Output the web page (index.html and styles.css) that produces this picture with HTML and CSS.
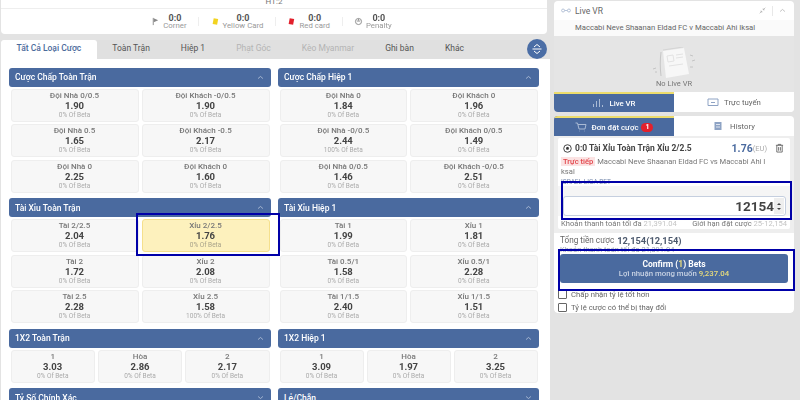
FILE: index.html
```html
<!DOCTYPE html><html>
<head>
    <title>Bet Slip</title>
    <link rel="stylesheet" href="styles.css">
</head>
<body>
<div class="page">
    <div class="main-col">
        <div class="score-card">
            <div class="ht-strip">HT:2</div>
            <div class="stats">
                <div class="stat">
                    <svg class="stat-icon" viewBox="0 0 10 10"><path d="M2.5 1v8" stroke="#888" fill="none"/><path d="M3 1.5l5 2.2-5 2.2z" fill="#888"/></svg>
                    <div class="stat-text"><b>0:0</b><span>Corner</span></div>
                </div>
                <i class="stat-sep"></i>
                <div class="stat">
                    <svg class="stat-icon" viewBox="0 0 10 10"><path d="M3 1.5l5 .8-1.2 6.4-5-.9z" fill="#f2d320"/></svg>
                    <div class="stat-text"><b>0:0</b><span>Yellow Card</span></div>
                </div>
                <i class="stat-sep"></i>
                <div class="stat">
                    <svg class="stat-icon" viewBox="0 0 10 10"><path d="M3 1.5l5 .8-1.2 6.4-5-.9z" fill="#e2202c"/></svg>
                    <div class="stat-text"><b>0:0</b><span>Red card</span></div>
                </div>
                <i class="stat-sep"></i>
                <div class="stat">
                    <svg class="stat-icon" viewBox="0 0 10 10"><circle cx="5" cy="5" r="3.4" stroke="#888" fill="none"/><path d="M3 4.5h4M5 2v2" stroke="#888" fill="none"/></svg>
                    <div class="stat-text"><b>0:0</b><span>Penalty</span></div>
                </div>
            </div>
        </div>

        <div class="tabs">
            <div class="tab active">Tất Cả Loại Cược</div>
            <div class="tab">Toàn Trận</div>
            <div class="tab">Hiệp 1</div>
            <div class="tab muted">Phạt Góc</div>
            <div class="tab muted">Kèo Myanmar</div>
            <div class="tab">Ghi bàn</div>
            <div class="tab">Khác</div>
            <div class="expand-btn">
                <svg viewBox="0 0 12 12" width="12" height="12"><path d="M3 4l3-2.5L9 4M3 8l3 2.5L9 8" stroke="#fff" fill="none"/><path d="M1.5 6h9" stroke="#fff"/></svg>
            </div>
        </div>

        <div class="markets">
            <div class="market">
                <div class="market-head">Cược Chấp Toàn Trận <svg class="chev" viewBox="0 0 10 6"><path d="M1.5 4.5L5 1.5l3.5 3" /></svg></div>
                <div class="odds two">
                    <div class="cell"><b>Đội Nhà 0/0.5</b><strong>1.90</strong><span>0% Of Beta</span></div>
                    <div class="cell"><b>Đội Khách -0/0.5</b><strong>1.90</strong><span>0% Of Beta</span></div>
                    <div class="cell"><b>Đội Nhà 0.5</b><strong>1.65</strong><span>0% Of Beta</span></div>
                    <div class="cell"><b>Đội Khách -0.5</b><strong>2.17</strong><span>0% Of Beta</span></div>
                    <div class="cell"><b>Đội Nhà 0</b><strong>2.25</strong><span>0% Of Beta</span></div>
                    <div class="cell"><b>Đội Khách 0</b><strong>1.60</strong><span>0% Of Beta</span></div>
                </div>
            </div>
            <div class="market">
                <div class="market-head">Cược Chấp Hiệp 1 <svg class="chev" viewBox="0 0 10 6"><path d="M1.5 4.5L5 1.5l3.5 3" /></svg></div>
                <div class="odds two">
                    <div class="cell"><b>Đội Nhà 0</b><strong>1.84</strong><span>0% Of Beta</span></div>
                    <div class="cell"><b>Đội Khách 0</b><strong>1.96</strong><span>0% Of Beta</span></div>
                    <div class="cell"><b>Đội Nhà -0/0.5</b><strong>2.44</strong><span>100% Of Beta</span></div>
                    <div class="cell"><b>Đội Khách 0/0.5</b><strong>1.49</strong><span>0% Of Beta</span></div>
                    <div class="cell"><b>Đội Nhà 0/0.5</b><strong>1.46</strong><span>0% Of Beta</span></div>
                    <div class="cell"><b>Đội Khách -0/0.5</b><strong>2.51</strong><span>0% Of Beta</span></div>
                </div>
            </div>
            <div class="market">
                <div class="market-head">Tài Xỉu Toàn Trận <svg class="chev" viewBox="0 0 10 6"><path d="M1.5 4.5L5 1.5l3.5 3" /></svg></div>
                <div class="odds two">
                    <div class="cell"><b>Tài 2/2.5</b><strong>2.04</strong><span>0% Of Beta</span></div>
                    <div class="cell picked"><b>Xỉu 2/2.5</b><strong>1.76</strong><span>0% Of Beta</span></div>
                    <div class="cell"><b>Tài 2</b><strong>1.72</strong><span>0% Of Beta</span></div>
                    <div class="cell"><b>Xỉu 2</b><strong>2.08</strong><span>0% Of Beta</span></div>
                    <div class="cell"><b>Tài 2.5</b><strong>2.28</strong><span>0% Of Beta</span></div>
                    <div class="cell"><b>Xỉu 2.5</b><strong>1.58</strong><span>100% Of Beta</span></div>
                </div>
            </div>
            <div class="market">
                <div class="market-head">Tài Xỉu Hiệp 1 <svg class="chev" viewBox="0 0 10 6"><path d="M1.5 4.5L5 1.5l3.5 3" /></svg></div>
                <div class="odds two">
                    <div class="cell"><b>Tài 1</b><strong>1.99</strong><span>0% Of Beta</span></div>
                    <div class="cell"><b>Xỉu 1</b><strong>1.81</strong><span>0% Of Beta</span></div>
                    <div class="cell"><b>Tài 0.5/1</b><strong>1.58</strong><span>0% Of Beta</span></div>
                    <div class="cell"><b>Xỉu 0.5/1</b><strong>2.28</strong><span>0% Of Beta</span></div>
                    <div class="cell"><b>Tài 1/1.5</b><strong>2.40</strong><span>0% Of Beta</span></div>
                    <div class="cell"><b>Xỉu 1/1.5</b><strong>1.51</strong><span>0% Of Beta</span></div>
                </div>
            </div>
            <div class="market">
                <div class="market-head">1X2 Toàn Trận <svg class="chev" viewBox="0 0 10 6"><path d="M1.5 4.5L5 1.5l3.5 3" /></svg></div>
                <div class="odds three">
                    <div class="cell"><b>1</b><strong>3.03</strong><span>0% Of Beta</span></div>
                    <div class="cell"><b>Hòa</b><strong>2.86</strong><span>0% Of Beta</span></div>
                    <div class="cell"><b>2</b><strong>2.17</strong><span>0% Of Beta</span></div>
                </div>
            </div>
            <div class="market">
                <div class="market-head">1X2 Hiệp 1 <svg class="chev" viewBox="0 0 10 6"><path d="M1.5 4.5L5 1.5l3.5 3" /></svg></div>
                <div class="odds three">
                    <div class="cell"><b>1</b><strong>3.09</strong><span>0% Of Beta</span></div>
                    <div class="cell"><b>Hòa</b><strong>1.97</strong><span>0% Of Beta</span></div>
                    <div class="cell"><b>2</b><strong>3.25</strong><span>0% Of Beta</span></div>
                </div>
            </div>
            <div class="market">
                <div class="market-head">Tỷ Số Chính Xác <svg class="chev" viewBox="0 0 10 6"><path d="M1.5 1.5L5 4.5l3.5-3" /></svg></div>
            </div>
            <div class="market">
                <div class="market-head">Lẻ/Chẵn <svg class="chev" viewBox="0 0 10 6"><path d="M1.5 1.5L5 4.5l3.5-3" /></svg></div>
            </div>
        </div>
    </div>

    <div class="side-col">
        <div class="live-card">
            <div class="live-head">
                <svg class="live-logo" viewBox="0 0 12 8"><circle cx="2.5" cy="4" r="1.8"/><circle cx="9.5" cy="4" r="1.8"/><path d="M4.5 4h3"/></svg>
                <span>Live VR</span>
                <svg class="live-tool" viewBox="0 0 10 10"><path d="M1 9l3-3M9 1L6 4M6 2v2h2M2 6h2v2"/></svg>
                <i class="live-sep"></i>
                <svg class="live-tool" viewBox="0 0 10 6"><path d="M1.5 4.5L5 1.5l3.5 3"/></svg>
            </div>
            <div class="live-match">Maccabi Neve Shaanan Eldad FC v Maccabi Ahi Iksal</div>
            <div class="live-empty">
                <svg viewBox="0 0 46 32" width="46" height="32">
                    <path d="M12 4l21-3 5 26-23 4z" fill="#f7f7f7"/>
                    <path d="M10 5c-1 8-1 16 0 24" stroke="#c6c6c6" fill="none"/>
                    <path d="M12 3l20-3" stroke="#d4d4d4" fill="none"/>
                    <path d="M16 9l6-1 1 6-6 1zM25 8l7-1M25 11l7-1M18 19l14-2" stroke="#e3e3e3" fill="none"/>
                    <path d="M39 8l3 1M41 14l3-1M39 20l3 0M2 22l3-1M4 25l2 0" stroke="#c4c4c4" fill="none"/>
                </svg>
                <div>No Live VR</div>
            </div>
            <div class="side-tabs">
                <div class="side-tab on">
                    <svg viewBox="0 0 12 10" width="12" height="10"><path d="M1.5 9V6M4.5 9V3M7.5 9V1M10.5 9V7" stroke="#a9bad4" fill="none"/></svg>
                    Live VR
                </div>
                <div class="side-tab">
                    <svg viewBox="0 0 12 10" width="12" height="10"><path d="M1 2h10v6.5H1z" stroke="#8ea3c4" fill="none"/><path d="M4 5.5h4" stroke="#8ea3c4"/></svg>
                    Trực tuyến
                </div>
            </div>
        </div>

        <div class="slip-card">
            <div class="side-tabs">
                <div class="side-tab on">
                    <svg viewBox="0 0 12 10" width="12" height="10"><path d="M.5 1h2l1.5 6h6l1-4.5H3M4.5 9h.5M9 9h.5" stroke="#a9bad4" fill="none"/></svg>
                    Đơn đặt cược <em class="count">1</em>
                </div>
                <div class="side-tab">
                    <svg viewBox="0 0 10 10" width="10" height="10"><path d="M1.5 1h7v8h-7z" fill="#8ea3c4"/><path d="M3 3.5h4M3 6h4" stroke="#dfe5ef"/></svg>
                    <span class="history">History</span>
                </div>
            </div>
            <div class="slip-wrap">
                <div class="slip">
                    <div class="slip-title">
                        <svg viewBox="0 0 10 10" width="9" height="9"><circle cx="5" cy="5" r="4.2" fill="#fff" stroke="#333"/><path d="M5 3l1.8 1.3-.7 2H3.9l-.7-2z" fill="#333"/></svg>
                        <b>0:0 Tài Xỉu Toàn Trận Xỉu 2/2.5</b>
                        <strong>1.76</strong><small>(EU)</small>
                        <svg class="trash" viewBox="0 0 10 10" width="9" height="10"><path d="M1 2h8M3.5 2V1h3v1M2 2v7.5h6V2M4 4v4M6 4v4" stroke="#666" fill="none"/></svg>
                    </div>
                    <div class="slip-match"><mark>Trực tiếp</mark> Maccabi Neve Shaanan Eldad FC vs Maccabi Ahi Iksal</div>
                    <div class="slip-league">ISRAEL LIGA BET</div>
                    <div class="stake-row">
                        <div class="stake-box">12154<span class="spin"><i class="up"></i><i class="down"></i></span></div>
                    </div>
                    <div class="slip-limits">
                        <span>Khoản thanh toán tối đa <u>21,391.04</u></span>
                        <span>Giới hạn đặt cược <u>25-12,154</u></span>
                    </div>
                </div>
            </div>
            <div class="confirm-area">
                <div class="total">Tổng tiền cược <b>12,154(12,154)</b></div>
                <div class="total-max">Khoản thanh toán tối đa 21,391.04</div>
                <div class="confirm-btn">
                    <div class="confirm-main">Confirm (<em>1</em>) Bets</div>
                    <div class="confirm-sub">Lợi nhuận mong muốn <em>9,237.04</em></div>
                </div>
                <label class="check"><i></i>Chấp nhận tỷ lệ tốt hơn</label>
                <label class="check"><i></i>Tỷ lệ cược có thể bị thay đổi</label>
            </div>
        </div>
    </div>
</div>

<!-- blue marker boxes drawn over the screenshot -->
<div class="marker marker-odd"></div>
<div class="marker marker-stake"></div>
<div class="marker marker-confirm"></div>
</body>
</html>
```

FILE: styles.css
```css
body {
    margin: 0;
    width: 800px;
    height: 400px;
    overflow: hidden;
    position: relative;
    background: #e3e3e3;
    font-family: Roboto, "Liberation Sans", sans-serif;
    color: #555;
}
.page {
    display: flex;
    height: 400px;
    filter: blur(0.3px);
}
.main-col {
    width: 549px;
    margin-left: 1px;
    margin-right: 4px;
    display: flex;
    flex-direction: column;
}
.side-col {
    width: 240px;
    padding-top: 1px;
}

/* score strip */
.score-card {
    background: #fff;
    height: 34px;
    width: 546px;
    border-radius: 0 0 4px 4px;
}
.ht-strip {
    height: 8px;
    line-height: 4px;
    overflow: hidden;
    text-align: center;
    font-size: 8px;
    color: #777;
    border-bottom: 1px solid #eee;
}
.stats {
    display: flex;
    align-items: center;
    justify-content: center;
    height: 25px;
    padding-right: 5px;
}
.stat {
    display: flex;
    align-items: center;
    gap: 3px;
}
.stat-icon {
    width: 9px;
    height: 9px;
}
.stat-text {
    display: flex;
    flex-direction: column;
    align-items: center;
    line-height: 7px;
    font-size: 7.8px;
    color: #999;
}
.stat-text b {
    font-size: 9px;
    color: #555;
}
.stat-sep {
    width: 1px;
    height: 9px;
    background: #eee;
    margin: 0 11.5px;
}

/* tabs */
.tabs {
    margin-top: 6px;
    height: 19px;
    display: flex;
    align-items: center;
    position: relative;
    background: #e0e0e0;
}
.tab {
    padding: 0 15.5px;
    height: 19px;
    line-height: 17px;
    font-size: 8.5px;
    color: #555;
}
.tab.active {
    background: #fff;
    color: #4b6a9b;
    font-weight: 500;
    border-radius: 3px 3px 0 0;
}
.tab.muted {
    color: #b4b4b4;
}
.expand-btn {
    position: absolute;
    left: 526px;
    top: -1px;
    width: 20px;
    height: 20px;
    border-radius: 50%;
    background: #4a6da5;
    display: flex;
    align-items: center;
    justify-content: center;
}

/* markets */
.markets {
    flex: 1;
    background: #fff;
    padding: 8.5px 9px 0 8px;
    display: grid;
    grid-template-columns: 262px 261px;
    column-gap: 7px;
    align-content: start;
}
.market {
    padding-bottom: 5.5px;
}
.market-head {
    height: 19px;
    line-height: 18px;
    padding: 0 7px 0 6px;
    background: #4a6a9f;
    border-radius: 3px;
    color: #fff;
    font-size: 8.5px;
    font-weight: 500;
    display: flex;
    justify-content: space-between;
    align-items: center;
}
.chev {
    width: 7px;
    height: 5px;
    fill: none;
    stroke: #c8d3e4;
    stroke-width: 1;
}
.odds {
    display: grid;
    gap: 2.5px 3px;
    padding: 2px 1.5px 0;
}
.odds.two {
    grid-template-columns: 1fr 1fr;
}
.odds.three {
    grid-template-columns: 1fr 1fr 1fr;
}
.cell {
    height: 33px;
    box-sizing: border-box;
    padding-top: 1px;
    background: #f7f7f7;
    border: 1px solid #eee;
    border-radius: 3px;
    display: flex;
    flex-direction: column;
    align-items: center;
    text-align: center;
}
.cell b {
    font-size: 8px;
    font-weight: 500;
    line-height: 10px;
    color: #777;
}
.cell strong {
    font-size: 9.5px;
    font-weight: 700;
    line-height: 10px;
    color: #444;
}
.cell span {
    font-size: 6.5px;
    line-height: 9px;
    color: #aaa;
}
.cell.picked {
    background: #fdf1bd;
    border-color: #f5e08c;
}
.cell.picked span {
    color: #a8a28a;
}

/* live card */
.live-card {
    background: #fff;
    border-radius: 4px;
    overflow: hidden;
}
.live-head {
    height: 19px;
    display: flex;
    align-items: center;
    padding: 0 8px 0 7px;
    font-size: 8.5px;
    color: #666;
}
.live-head span {
    margin-left: 4px;
    margin-right: auto;
}
.live-logo {
    width: 10px;
    height: 7px;
    fill: none;
    stroke: #a8b8d0;
}
.live-tool {
    width: 7px;
    height: 7px;
    fill: none;
    stroke: #aaa;
}
.live-sep {
    width: 1px;
    height: 10px;
    background: #e8e8e8;
    margin: 0 6px;
}
.live-match {
    height: 16px;
    line-height: 15px;
    padding-left: 21px;
    font-size: 7.7px;
    color: #666;
    background: #fafafa;
}
.live-empty {
    height: 56px;
    box-sizing: border-box;
    padding-top: 11px;
    background: #e5e5e5;
    display: flex;
    flex-direction: column;
    align-items: center;
    font-size: 7.5px;
    line-height: 9px;
    color: #777;
}
.side-tabs {
    display: flex;
}
.side-tab {
    flex: 1;
    height: 20px;
    display: flex;
    align-items: center;
    justify-content: center;
    gap: 5px;
    font-size: 7.8px;
    color: #666;
    background: #fff;
}
.side-tab.on {
    box-sizing: border-box;
    border-top: 2px solid #ecdc6c;
    background: #4a6a9f;
    color: #fff;
    font-weight: 500;
}

/* bet slip */
.slip-card {
    margin-top: 4px;
    border-radius: 4px;
    overflow: hidden;
}
.slip-wrap {
    background: #eee;
    padding: 2px 4px 4px;
}
.slip {
    background: #fff;
    height: 91px;
    padding: 4px 3px 0;
    box-sizing: border-box;
    border-radius: 2px;
}
.slip-title {
    display: flex;
    align-items: center;
    height: 12px;
    font-size: 8.5px;
    padding-left: 2px;
    color: #444;
}
.slip-title b {
    margin-left: 3px;
    font-weight: 700;
    margin-right: auto;
}
.slip-title strong {
    font-size: 10.5px;
    color: #4a6a9f;
}
.slip-title small {
    font-size: 7.5px;
    color: #aaa;
}
.trash {
    margin-left: 8px;
    margin-right: 3px;
}
.slip-match {
    margin-top: 3px;
    padding-right: 18px;
    word-break: break-all;
    font-size: 7.6px;
    line-height: 10px;
    color: #777;
}
.slip-match mark {
    background: #fbe3e3;
    color: #e2444a;
    font-weight: 500;
    padding: 0 2px;
}
.slip-league {
    font-size: 6.5px;
    color: #7a8db0;
    line-height: 8px;
    margin-top: 1px;
    height: 8px;
}
.stake-row {
    background: #f5f5f5;
    margin: 0 -3px;
    padding: 10px 4px 0 5px;
}
.stake-box {
    height: 20px;
    box-sizing: border-box;
    background: #fff;
    border: 1px solid #c5cfdf;
    border-radius: 3px;
    padding-right: 1px;
    display: flex;
    align-items: center;
    justify-content: flex-end;
    font-size: 13.5px;
    font-weight: 700;
    color: #444;
}
.spin {
    width: 10px;
    height: 16px;
    margin-left: 0;
    background: #eee;
    display: flex;
    flex-direction: column;
    align-items: center;
    justify-content: center;
    gap: 3px;
}
.spin i {
    width: 0;
    height: 0;
    border-left: 2px solid transparent;
    border-right: 2px solid transparent;
}
.spin .up {
    border-bottom: 2px solid #444;
}
.spin .down {
    border-top: 2px solid #444;
}
.slip-limits {
    display: flex;
    justify-content: space-between;
    font-size: 7.6px;
    line-height: 9px;
    margin-top: 3px;
    color: #777;
}
.slip-limits u {
    color: #c4c4c4;
    text-decoration: none;
}
.confirm-area {
    background: #fff;
    height: 80px;
    padding: 2px 6px 0 4px;
    box-sizing: border-box;
    border-radius: 0 0 4px 4px;
    font-size: 8.2px;
    color: #666;
}
.total {
    padding-left: 2px;
    display: flex;
    align-items: center;
    gap: 3px;
    line-height: 11px;
}
.total b {
    font-size: 9.3px;
    color: #4d5a6e;
    font-weight: 700;
}
.total-max {
    font-size: 7.5px;
    line-height: 8px;
    height: 8px;
    padding-left: 2px;
    color: #9aa4b6;
}
.confirm-btn {
    margin: 0 0 0 2px;
    height: 29px;
    background: #4a6a9f;
    border-radius: 3px;
    text-align: center;
    color: #fff;
    padding-top: 5px;
    box-sizing: border-box;
}
.confirm-main {
    font-size: 8.5px;
    font-weight: 700;
    line-height: 10px;
}
.confirm-sub {
    font-size: 7.8px;
    font-weight: 500;
    line-height: 9px;
    color: #c9d3e4;
}
.confirm-btn em {
    font-style: normal;
    color: #e8dc7c;
}
.check {
    display: flex;
    align-items: center;
    gap: 4px;
    height: 13px;
    font-size: 7.7px;
    color: #666;
}
.check i {
    width: 7px;
    height: 7px;
    border: 1px solid #666;
    border-radius: 1px;
    background: #fff;
}
.confirm-btn + .check {
    margin-top: 5px;
}
.count {
    font-style: normal;
    font-size: 7px;
    font-weight: 700;
    background: #e2202c;
    color: #fff;
    width: 12px;
    height: 9px;
    line-height: 9px;
    border-radius: 5px;
    text-align: center;
    margin-left: -2px;
}
.history {
    margin-left: 2px;
}

/* annotation boxes */
.marker {
    position: absolute;
    box-sizing: border-box;
    border: 2px solid #0000a8;
}
.marker-odd {
    left: 136px;
    top: 213px;
    width: 144px;
    height: 43px;
}
.marker-stake {
    left: 561px;
    top: 181px;
    width: 231px;
    height: 39px;
}
.marker-confirm {
    left: 558px;
    top: 249px;
    width: 237px;
    height: 42px;
}
```
